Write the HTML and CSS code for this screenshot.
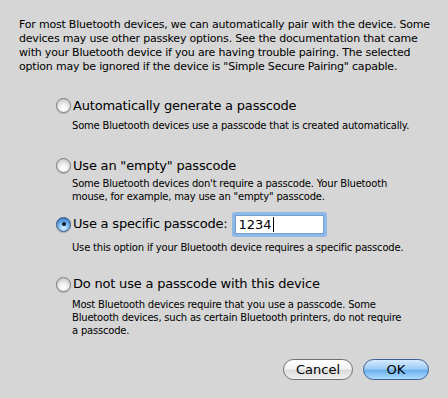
FILE: index.html
```html
<!DOCTYPE html>
<html>
<head>
<meta charset="utf-8">
<link rel="stylesheet" href="styles.css">
</head>
<body>
<div class="dialog">
  <p class="intro">For most Bluetooth devices, we can automatically pair with the device. Some<br>devices may use other passkey options. See the documentation that came<br>with your Bluetooth device if you are having trouble pairing. The selected<br>option may be ignored if the device is "Simple Secure Pairing" capable.</p>
  <div class="options">
    <div class="option opt1">
      <div class="row"><span class="radio"></span><span class="label">Automatically generate a passcode</span></div>
      <p class="desc">Some Bluetooth devices use a passcode that is created automatically.</p>
    </div>
    <div class="option opt2">
      <div class="row"><span class="radio"></span><span class="label">Use an "empty" passcode</span></div>
      <p class="desc">Some Bluetooth devices don't require a passcode. Your Bluetooth<br>mouse, for example, may use an "empty" passcode.</p>
    </div>
    <div class="option opt3">
      <div class="row tall"><span class="radio checked"></span><span class="label">Use a specific passcode:</span><span class="field"><span class="value">1234</span><span class="caret"></span></span></div>
      <p class="desc">Use this option if your Bluetooth device requires a specific passcode.</p>
    </div>
    <div class="option opt4">
      <div class="row"><span class="radio"></span><span class="label">Do not use a passcode with this device</span></div>
      <p class="desc">Most Bluetooth devices require that you use a passcode. Some<br>Bluetooth devices, such as certain Bluetooth printers, do not require<br>a passcode.</p>
    </div>
  </div>
  <div class="buttons">
    <button class="btn cancel">Cancel</button>
    <button class="btn ok">OK</button>
  </div>
</div>
</body>
</html>
```
FILE: styles.css
```css
html, body {
  margin: 0;
  padding: 0;
  background: #d6d6d6;
}
.dialog {
  width: 448px;
  height: 398px;
  box-sizing: border-box;
  padding: 18px 19px 0 19px;
  font-family: "DejaVu Sans", sans-serif;
  color: #000;
}
.intro {
  margin: 0;
  font-size: 11px;
  line-height: 14px;
  letter-spacing: -0.2px;
  white-space: nowrap;
}
.options {
  display: flex;
  flex-direction: column;
  padding-left: 37px;
}
.option {
  display: flex;
  flex-direction: column;
}
.opt1 { margin-top: 23.5px; }
.opt2 { margin-top: 25.5px; }
.opt3 { margin-top: 8.5px; }
.opt4 { margin-top: 22.5px; }
.row {
  display: flex;
  align-items: center;
  height: 16px;
}
.row.tall { height: 25px; }
.radio {
  width: 15px;
  height: 15px;
  box-sizing: border-box;
  border-radius: 50%;
  border: 1px solid #7d7d7d;
  background: radial-gradient(circle at 50% 72%, #ffffff 0%, #f4f4f4 30%, #cfcfcf 75%, #a9a9a9 100%);
  box-shadow: 0 1px 1px rgba(0,0,0,0.2);
  flex: none;
  position: relative;
}
.radio.checked {
  border-color: #34557f;
  background: radial-gradient(circle at 50% 78%, #d8efff 0%, #84c0f0 40%, #3f86d2 78%, #2a62a8 100%);
}
.radio.checked::after {
  content: "";
  position: absolute;
  left: 4.5px;
  top: 4.5px;
  width: 4px;
  height: 4px;
  border-radius: 50%;
  background: #0d1a2e;
}
.label {
  margin-left: 2px;
  font-size: 13px;
  line-height: 16px;
  letter-spacing: -0.2px;
  white-space: nowrap;
}
.field {
  margin-left: 5px;
  width: 95px;
  height: 25px;
  box-sizing: border-box;
  border: 3px solid #8fb8e6;
  border-radius: 3px;
  background: #fff;
  box-shadow: inset 0 0 0 1px #6f9fd6;
  display: flex;
  align-items: center;
  padding-left: 3px;
  font-size: 13px;
}
.caret {
  width: 1px;
  height: 15px;
  background: #000;
  margin-left: 1px;
}
.desc {
  margin: 3.5px 0 0 16px;
  font-size: 10px;
  line-height: 13px;
  letter-spacing: -0.2px;
  white-space: nowrap;
}
.opt1 .desc { margin-top: 5.5px; }
.opt3 .desc { margin-top: 4px; }
.opt4 .desc { margin-top: 5.5px; }
.buttons {
  display: flex;
  justify-content: flex-end;
  gap: 10px;
  margin-top: 22px;
}
.btn {
  height: 21px;
  border-radius: 11px;
  font-family: "DejaVu Sans", sans-serif;
  font-size: 13px;
  line-height: 17px;
  padding: 0;
  color: #000;
  box-sizing: border-box;
}
.cancel {
  width: 70px;
  border: 1px solid #6f6f6f;
  background: linear-gradient(#ffffff 0%, #f4f4f4 45%, #dcdcdc 55%, #f0f0f0 100%);
}
.ok {
  width: 66px;
  border: 1px solid #3f5f92;
  background: linear-gradient(#d4ebfd 0%, #9fcdf5 45%, #6fb1ec 55%, #a9dbff 100%);
}
```
